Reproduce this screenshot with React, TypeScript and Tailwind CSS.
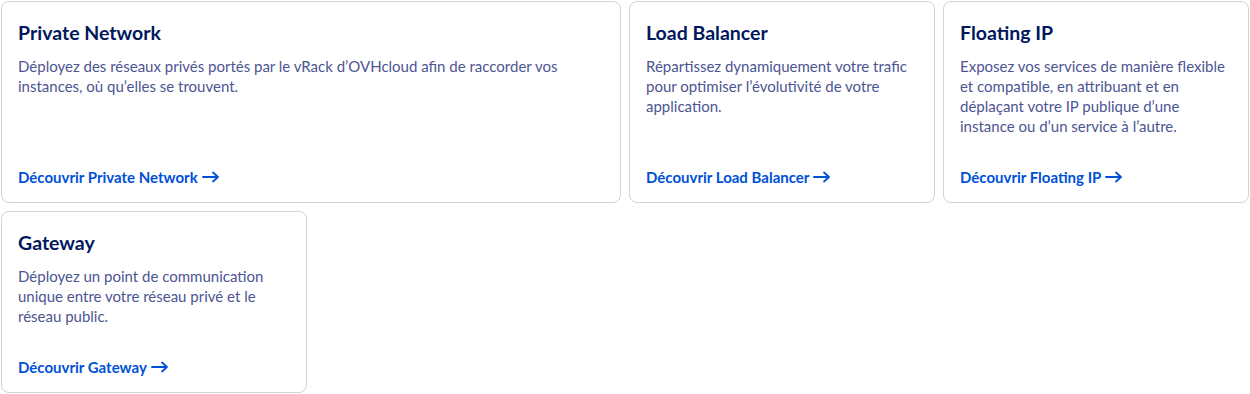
type Item = {
  title: string
  text: string
  link: string
  wide?: boolean
}

const items: Item[] = [
  {
    title: "Private Network",
    text: "Déployez des réseaux privés portés par le vRack d’OVHcloud afin de raccorder vos instances, où qu’elles se trouvent.",
    link: "Découvrir Private Network",
    wide: true,
  },
  {
    title: "Load Balancer",
    text: "Répartissez dynamiquement votre trafic pour optimiser l’évolutivité de votre application.",
    link: "Découvrir Load Balancer",
  },
  {
    title: "Floating IP",
    text: "Exposez vos services de manière flexible et compatible, en attribuant et en déplaçant votre IP publique d’une instance ou d’un service à l’autre.",
    link: "Découvrir Floating IP",
  },
  {
    title: "Gateway",
    text: "Déployez un point de communication unique entre votre réseau privé et le réseau public.",
    link: "Découvrir Gateway",
  },
]

function Arrow() {
  return (
    <svg width="18" height="12" viewBox="0 0 18 12" fill="none" stroke="currentColor" strokeWidth="1.8" strokeLinecap="round" strokeLinejoin="round">
      <path d="M1 6h15M11 1.5 16 6l-5 4.5" />
    </svg>
  )
}

export default function App() {
  return (
    <div className="w-[1250px] p-px bg-white font-['Lato','Noto_Sans',sans-serif]">
      <div className="grid grid-cols-4 gap-2">
        {items.map((item) => (
          <div
            key={item.title}
            className={`flex flex-col rounded-lg border border-[#d4d4d4] px-4 pt-4 pb-[15px] ${item.wide ? "col-span-2" : ""}`}
          >
            <h3 className="text-[19.5px] leading-[30px] font-bold text-[#00185e]">{item.title}</h3>
            <p className="mt-2 text-[15px] leading-5 text-[#4d5592]">{item.text}</p>
            <a href="#" className="mt-auto pt-[31px] flex items-center gap-1 text-[15px] leading-5 font-bold text-[#0050d7]">
              {item.link}
              <Arrow />
            </a>
          </div>
        ))}
      </div>
    </div>
  )
}
